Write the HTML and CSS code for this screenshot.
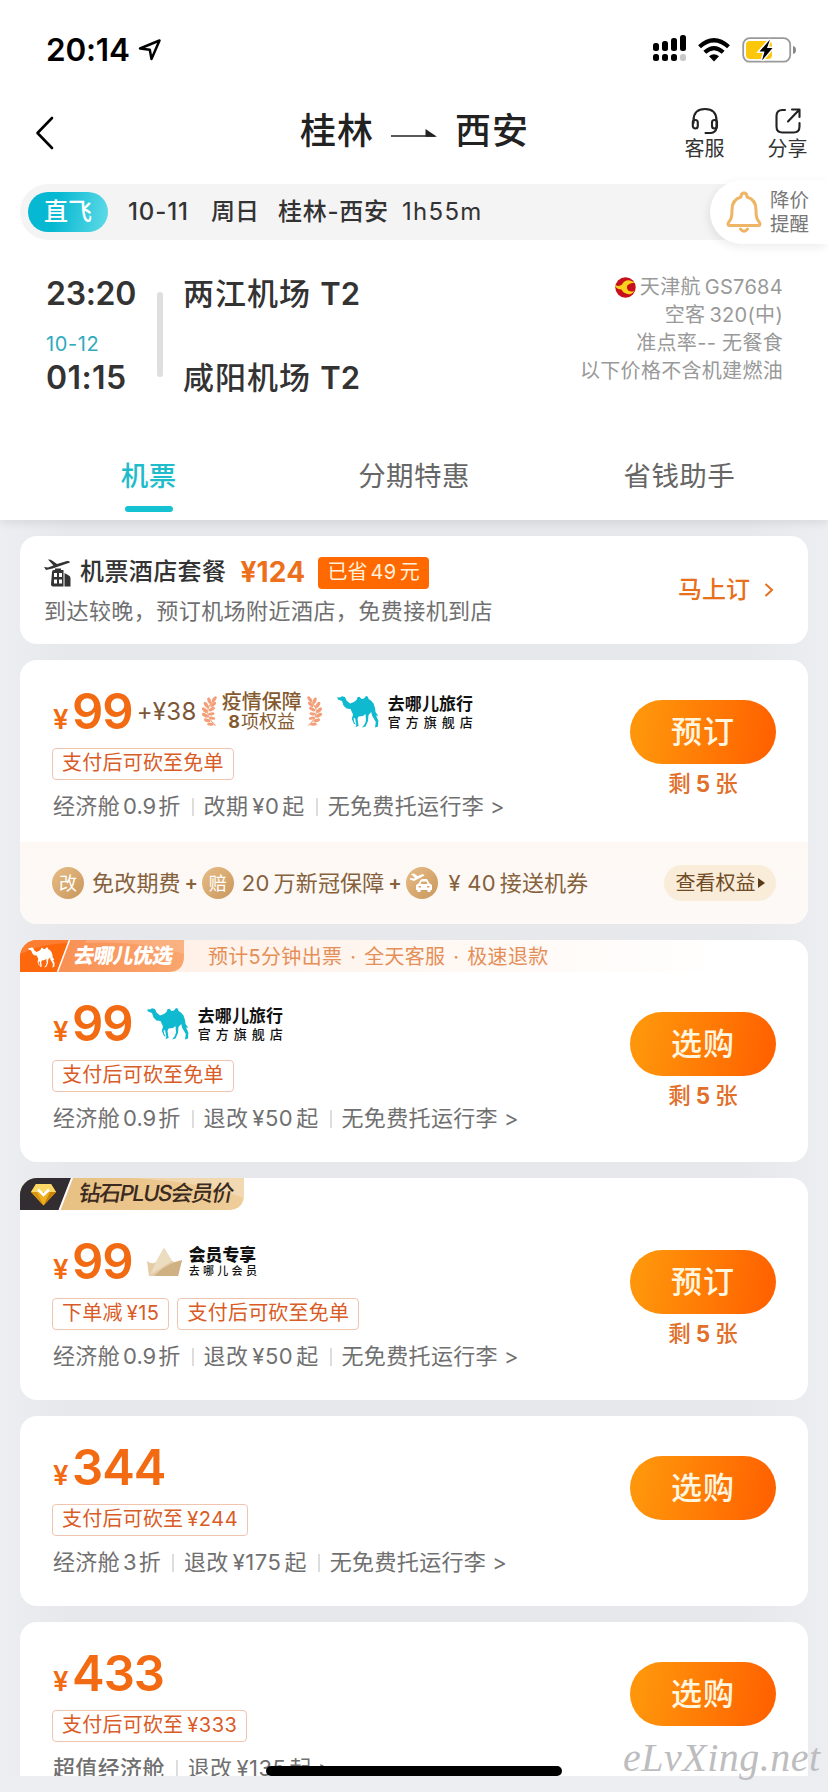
FILE: index.html
```html
<!DOCTYPE html>
<html lang="zh-CN">
<head>
<meta charset="utf-8">
<title>桂林 - 西安</title>
<link rel="stylesheet" href="styles.css">
</head>
<body>
<svg class="defs" width="0" height="0">
  <symbol id="camel" viewBox="0 0 42 32">
    <path d="M0 1.500 3.500 1.300 5 .3 8 1 9.500 4.500 13 7.500 17 6 19.500 4 20.500 1.200 22.500 .8 24.500 3 27 2.500 29 0 31 .8 31.500 3 34 4.500 36.500 7.500 38 12 38.500 16 41 19.500 40 20 38.800 19 41.300 24.500 41 30.500 38 31.600 38.800 26 35 19.500 34.300 16 31.500 19 31 25 28.500 30.500 25 31.600 27.800 28 29 24.500 28.500 18 26 20 21.500 20.500 20.500 23 21.600 29.800 18.500 31.200 19.300 28.500 18 22 16.500 22.500 17.200 26 19 28.500 17 28 14.800 23 16 18.500 13.500 13 9.500 12.500 6.500 9.500 5 5 1 3.600Z"/>
  </symbol>
  <symbol id="laurel" viewBox="0 0 18 34">
    <path d="M14.500 4Q-1 17 15.500 31.500" fill="none" stroke="#f3a884" stroke-width="1.200"/>
    <g fill="#f3a07a">
      <ellipse cx="14" cy="3.500" rx="1.800" ry="3.700" transform="rotate(35 14 3.500)"/>
      <ellipse cx="8.800" cy="5" rx="1.800" ry="3.700" transform="rotate(-20 8.800 5)"/>
      <ellipse cx="13" cy="9" rx="1.700" ry="3.600" transform="rotate(50 13 9)"/>
      <ellipse cx="5.500" cy="9.500" rx="1.900" ry="3.700" transform="rotate(-35 5.500 9.500)"/>
      <ellipse cx="11.500" cy="14" rx="1.700" ry="3.600" transform="rotate(60 11.500 14)"/>
      <ellipse cx="4" cy="15" rx="1.900" ry="3.700" transform="rotate(-45 4 15)"/>
      <ellipse cx="11" cy="19" rx="1.600" ry="3.400" transform="rotate(80 11 19)"/>
      <ellipse cx="4.300" cy="20.500" rx="1.900" ry="3.700" transform="rotate(-60 4.300 20.500)"/>
      <ellipse cx="12" cy="23.500" rx="1.600" ry="3.200" transform="rotate(100 12 23.500)"/>
      <ellipse cx="6.500" cy="25.800" rx="1.800" ry="3.600" transform="rotate(-70 6.500 25.800)"/>
      <ellipse cx="10" cy="30" rx="1.500" ry="3.500" transform="rotate(-85 10 30)"/>
    </g>
  </symbol>
</svg>

<div class="screen">
  <header class="top">
    <div class="status">
      <span class="clock">20:14</span>
      <svg class="loc" width="24" height="22" viewBox="0 0 24 22"><path d="M2 9.500 21.500 1.500 13.500 20 11.800 10.800Z" fill="none" stroke="#000" stroke-width="2.500" stroke-linejoin="round"/></svg>
      <svg class="signal" width="34" height="28" viewBox="0 0 34 28">
        <rect x="0" y="9" width="6" height="8" rx="2.500"/><rect x="9" y="7" width="6" height="10" rx="2.500"/><rect x="18" y="4" width="6" height="13" rx="2.500"/><rect x="27" y="1" width="6" height="16" rx="2.500"/>
        <rect x="0" y="20" width="6" height="7" rx="2.500"/><rect x="9" y="20" width="6" height="7" rx="2.500"/><rect x="18" y="20" width="6" height="7" rx="2.500"/><rect x="27" y="20" width="6" height="7" rx="2.500" fill="#c8c8c8"/>
      </svg>
      <svg class="wifi" width="32" height="24" viewBox="0 0 32 24"><g fill="none" stroke="#000" stroke-width="4.200"><path d="M1.500 8.800Q16-4.300 30.500 8.800"/><path d="M6.800 14.300Q16 6 25.200 14.300"/></g><path d="M11 18.200Q16 14.300 21 18.200L16 23.500Z"/></svg>
      <svg class="battery" width="56" height="28" viewBox="0 0 56 28">
        <rect x="1.200" y="2.200" width="47" height="23.500" rx="6.500" fill="#fff" stroke="#999" stroke-width="1.800"/>
        <rect x="4" y="5" width="26" height="18" rx="4" fill="#fcc60a"/>
        <path d="M51 10Q54 10.500 54 14T51 18Z" fill="#888"/>
        <path d="M28 3.500 17.500 15.500H22.500L20 24.500 30.500 12H25Z" fill="#000" stroke="#fff" stroke-width="3" paint-order="stroke"/>
      </svg>
    </div>

    <nav class="nav">
      <svg class="back" width="20" height="36" viewBox="0 0 20 36"><path d="M17 3 2.500 18 17 33" fill="none" stroke="#000" stroke-width="2.600" stroke-linecap="round" stroke-linejoin="round"/></svg>
      <h1 class="title"><span>桂林</span><svg width="46" height="10" viewBox="0 0 46 10"><path d="M0 8H44" stroke="#222" stroke-width="1.700"/><path d="M34.500 1 46 8.800H34.500Z" fill="#222"/></svg><span>西安</span></h1>
      <div class="tools">
        <div class="tool"><svg width="28" height="28" viewBox="0 0 28 28" fill="none" stroke="#222" stroke-width="2.100" stroke-linecap="round"><path d="M2.500 16V13.500Q2.500 2 14 2T25.500 13.500V21Q24.500 25.500 20 26H14.500"/><rect x="1.800" y="13" width="5" height="8.500" rx="2.500"/><rect x="21" y="13" width="5" height="8.500" rx="2.500"/></svg><span>客服</span></div>
        <div class="tool"><svg width="28" height="28" viewBox="0 0 28 28" fill="none" stroke="#222" stroke-width="2.100" stroke-linecap="round" stroke-linejoin="round"><path d="M11 3H8.500Q2.500 3 2.500 9V19.500Q2.500 25.500 8.500 25.500H19.500Q25.500 25.500 25.500 19.500V16M14 14.500 25 3M18 2.500H25.500V10"/></svg><span>分享</span></div>
      </div>
    </nav>

    <div class="trip">
      <span class="direct">直飞</span>
      <span class="trip-date">10-11</span>
      <span class="trip-day">周日</span>
      <span class="trip-route">桂林-西安</span>
      <span class="trip-time">1h55m</span>
      <div class="alert">
        <svg width="36" height="42" viewBox="0 0 36 42" fill="none" stroke="#efb566" stroke-width="3" stroke-linecap="round" stroke-linejoin="round"><path d="M15 6Q15 2 18 2T21 6Q30 8.500 30 19C30 27 31 28 33.500 31.500Q35 34.500 32 34.500H4Q1 34.500 2.500 31.500C5 28 6 27 6 19Q6 8.500 15 6Z"/><path d="M14.500 38Q18 42.500 21.500 38"/></svg>
        <span>降价<br>提醒</span>
      </div>
    </div>

    <section class="flight">
      <div class="times"><b>23:20</b><small>10-12</small><b class="arrive">01:15</b></div>
      <div class="line"></div>
      <div class="airports"><span>两江机场 <i>T2</i></span><span>咸阳机场 <i>T2</i></span></div>
      <div class="facts">
        <span><svg width="21" height="21" viewBox="0 0 21 21"><circle cx="10.500" cy="10.500" r="10.200" fill="#c80f1c"/><path d="M.5 8Q4 10 7 7.500Q10 2.500 15 3.500Q18 4 19.500 6Q16 5.500 14.500 7Q11.500 8 12 11Q12.500 14.500 17 14.500Q19 14.500 20 13Q17.500 18 12.500 17Q8 16 6.500 12.500Q3 12.500 .5 10Z" fill="#fbd21c"/></svg>天津航<i>GS7684</i></span>
        <span>空客<i>320(</i>中<i class="close">)</i></span>
        <span>准点率<i class="dash">--</i> 无餐食</span>
        <span>以下价格不含机建燃油</span>
      </div>
    </section>

    <div class="tabs"><span class="tab on">机票</span><span class="tab">分期特惠</span><span class="tab">省钱助手</span></div>
  </header>

  <main class="list">
    <section class="card combo">
      <div>
        <div class="combo-head">
          <svg width="28" height="30" viewBox="0 0 28 30" fill="#333"><path d="M4 1.500Q6 1 8 2.500L13 6 23 3Q26 2.500 26 4.500L8.500 10.500 2 12 0 9 4 9.500 9.500 7.500Z"/><path fill-rule="evenodd" d="M8 14Q8 12 10 12H11V10.500H17V12H19.500V28.500H9Q7 28.500 7 26.500ZM10 15V19H13V15ZM15 15V19H18V15ZM10 21.500V25.500H13V21.500ZM15 21.500V25.500H18V21.500Z"/><path d="M20.500 15 24 17Q26.500 18 26.500 20V28.500H20.500Z"/></svg>
          <b>机票酒店套餐</b><strong>¥124</strong><em>已省<i>49</i>元</em>
        </div>
        <p>到达较晚，预订机场附近酒店，免费接机到店</p>
      </div>
      <a class="go">马上订<svg width="10" height="16" viewBox="0 0 10 16"><path d="M1.500 2 8 8 1.500 14" fill="none" stroke="#e8701c" stroke-width="2"/></svg></a>
    </section>

    <section class="card">
      <div class="body short">
        <div class="info">
          <div class="price"><small>¥</small><b>99</b><span class="plus">+¥38</span>
            <div class="guard"><svg width="17" height="34"><use href="#laurel"/></svg><div><strong>疫情保障</strong><span><b>8</b>项权益</span></div><svg class="flip" width="17" height="34"><use href="#laurel"/></svg></div>
            <div class="shop near"><svg width="42" height="32" fill="#0fb9d0"><use href="#camel"/></svg><div><strong>去哪儿旅行</strong><span>官方旗舰店</span></div></div>
          </div>
          <div class="tags"><span>支付后可砍至免单</span></div>
          <div class="detail"><span>经济舱<i>0.9</i>折</span><span>改期<i>¥0</i>起</span><span>无免费托运行李<i class="gt">&gt;</i></span></div>
        </div>
        <div class="buy"><button>预订</button><span>剩<i>5</i>张</span></div>
      </div>
      <div class="perks">
        <span class="dot">改</span><span class="perk">免改期费</span><span class="and">+</span>
        <span class="dot">赔</span><span class="perk"><i>20</i>万新冠保障</span><span class="and">+</span>
        <span class="dot"><svg width="24" height="22" viewBox="0 0 24 22" fill="#fff"><path d="M1 2 4 1.500 7.500 4 13 2 14.500 3.500 4 9 0 7.500V6L4 6.500 5 6Z"/><path fill-rule="evenodd" d="M10.500 8 12 7H17L19.500 11.500 22 13V18H20.500V20H17.500V18H10.500V20H7.500V18H6V13L8.500 11.500ZM11.500 9.500 10.500 12H17.500L16.500 9.500ZM8.500 14V15.500H11V14ZM17 14V15.500H19.500V14Z"/></svg></span>
        <span class="perk last"><i>¥ 40</i>接送机券</span>
        <span class="more">查看权益<svg width="7" height="10" viewBox="0 0 7 10"><path d="M0 0 7 5 0 10Z" fill="#5a3a18"/></svg></span>
      </div>
    </section>

    <section class="card">
      <div class="ribbon select">
        <div class="badge"><svg width="164" height="32" viewBox="0 0 164 32"><defs><linearGradient id="o" x2="1"><stop stop-color="#f9894b"/><stop offset="1" stop-color="#f9a66e"/></linearGradient></defs><path d="M0 0H164V16Q164 32 148 32H0Z" fill="url(#o)"/><path d="M66 0H164V14Q120 0 66 3Z" fill="#fff" opacity=".15"/><path d="M0 0H49L37 32H0Z" fill="#fd680d"/><path d="M0 14Q24 3 48 3L49 0H0Z" fill="#fff" opacity=".15"/><path d="M49.500 0 37.500 32" stroke="#fff" stroke-width="1.500"/><svg x="8" y="7" width="27" height="21" fill="#fff"><use href="#camel"/></svg></svg><b>去哪儿优选</b></div>
        <span class="promo">预计5分钟出票 · 全天客服 · 极速退款</span>
      </div>
      <div class="body">
        <div class="info">
          <div class="price"><small>¥</small><b>99</b>
            <div class="shop"><svg width="42" height="32" fill="#0fb9d0"><use href="#camel"/></svg><div><strong>去哪儿旅行</strong><span>官方旗舰店</span></div></div>
          </div>
          <div class="tags"><span>支付后可砍至免单</span></div>
          <div class="detail"><span>经济舱<i>0.9</i>折</span><span>退改<i>¥50</i>起</span><span>无免费托运行李<i class="gt">&gt;</i></span></div>
        </div>
        <div class="buy"><button>选购</button><span>剩<i>5</i>张</span></div>
      </div>
    </section>

    <section class="card">
      <div class="ribbon">
        <div class="badge plusprice"><svg width="224" height="32" viewBox="0 0 224 32"><defs><linearGradient id="g" x2="1"><stop stop-color="#e6bd7e"/><stop offset="1" stop-color="#efcd99"/></linearGradient></defs><path d="M0 0H224V16Q224 32 208 32H0Z" fill="url(#g)"/><path d="M110 0H224V20Q180 3 110 0Z" fill="#fff" opacity=".25"/><path d="M0 0H52L39 32H0Z" fill="#312d31"/><path d="M52 0 39.500 32" stroke="#fff" stroke-width="2"/><path d="M16 6H31L36 14 23.500 27.500 11 14Z" fill="#eeb01e"/><path d="M16 6H31L36 14H11Z" fill="#fbd768"/><path d="M11 14H17L23.500 27.500Z" fill="#d79413"/><path d="M36 14H30L23.500 27.500Z" fill="#c98408"/><path d="M18 11.500 23.500 17 29 11.500" fill="none" stroke="#fff" stroke-width="2.500"/></svg><b>钻石PLUS会员价</b></div>
      </div>
      <div class="body">
        <div class="info">
          <div class="price"><small>¥</small><b>99</b>
            <div class="shop member"><svg width="35" height="30" viewBox="0 0 35 30"><path d="M0 14Q5 18 9 15L17 1 25 14Q31 17 35 13L31 29H2Z" fill="#e3cca6"/><path d="M17 1 25 14 3 28 9 15Z" fill="#ecdcc0"/><path d="M7 29Q20 16 35 13L31 29Z" fill="#d0b183"/></svg><div><strong>会员专享</strong><span>去哪儿会员</span></div></div>
          </div>
          <div class="tags"><span>下单减<i>¥15</i></span><span>支付后可砍至免单</span></div>
          <div class="detail"><span>经济舱<i>0.9</i>折</span><span>退改<i>¥50</i>起</span><span>无免费托运行李<i class="gt">&gt;</i></span></div>
        </div>
        <div class="buy"><button>预订</button><span>剩<i>5</i>张</span></div>
      </div>
    </section>

    <section class="card">
      <div class="body">
        <div class="info">
          <div class="price"><small>¥</small><b>344</b></div>
          <div class="tags"><span>支付后可砍至<i>¥244</i></span></div>
          <div class="detail"><span>经济舱<i>3</i>折</span><span>退改<i>¥175</i>起</span><span>无免费托运行李<i class="gt">&gt;</i></span></div>
        </div>
        <div class="buy"><button>选购</button></div>
      </div>
    </section>

    <section class="card">
      <div class="body">
        <div class="info">
          <div class="price"><small>¥</small><b>433</b></div>
          <div class="tags"><span>支付后可砍至<i>¥333</i></span></div>
          <div class="detail"><span class="strong">超值经济舱</span><span>退改<i>¥135</i>起<i class="gt">&gt;</i></span></div>
        </div>
        <div class="buy"><button>选购</button></div>
      </div>
    </section>
  </main>
  <div class="home"></div>
  <footer class="foot"></footer>
  <div class="mark">eLvXing.net</div>
</div>
</body>
</html>
```

FILE: styles.css
```css
* { box-sizing: border-box; }
body { margin: 0; background: #e8e9ed; font-family: Inter, "Noto Sans CJK SC", sans-serif; line-height: 1.2; color: #333; }
i, em { font-style: normal; }
p, h1 { margin: 0; }
svg { display: block; flex: none; }
.defs { position: absolute; }
.screen { position: relative; width: 828px; height: 1792px; overflow: hidden; display: flex; flex-direction: column; background: linear-gradient(90deg, #edeef2, #e7e8ec 8%, #e7e8ec 90%, #edeef2); }

.top { position: relative; z-index: 1; flex: none; height: 520px; background: #fff; box-shadow: 0 2px 10px rgba(0, 0, 0, .1); }
.status { height: 94px; padding: 5px 30px 0 46px; display: flex; align-items: center; }
.clock { width: 92px; font-size: 31.500px; font-weight: 600; color: #000; letter-spacing: -.2px; }
.signal { margin-left: 491px; margin-top: -4px; }
.wifi { margin-left: 11px; }
.battery { margin-left: 12px; }

.nav { height: 90px; padding: 0 20px 0 35px; display: flex; align-items: flex-start; }
.back { margin-top: 21px; }
.title { margin-left: 245px; height: 76px; display: flex; align-items: center; font-size: 36px; font-weight: 500; letter-spacing: 1px; color: #222; }
.title svg { margin: 2px 18px 0 17px; }
.tools { margin-left: auto; display: flex; gap: 42px; padding-top: 13px; }
.tool { width: 41px; display: flex; flex-direction: column; align-items: center; font-size: 20px; line-height: 24px; color: #333; }
.tool span { margin-top: 2px; }

.trip { height: 56px; margin-left: 20px; padding-left: 8px; display: flex; align-items: center; background: #f4f4f4; border-radius: 28px 0 0 28px; font-size: 24px; font-weight: 500; }
.direct { width: 80px; height: 40px; line-height: 40px; border-radius: 20px; text-align: center; color: #fff; background: linear-gradient(100deg, #06b8d1 35%, #60dbe8); }
.trip-date { width: 83px; margin-left: 20px; letter-spacing: .9px; }
.trip-day { width: 67px; }
.trip-route { width: 124px; letter-spacing: .7px; }
.trip-time { font-weight: 400; letter-spacing: 1.300px; }
.alert { margin-left: auto; width: 118px; height: 64px; padding-left: 16px; display: flex; align-items: center; gap: 8px; background: #fff; border-radius: 32px 0 0 32px; box-shadow: -2px 3px 10px rgba(0, 0, 0, .08); font-size: 19.500px; line-height: 24px; font-weight: 400; color: #777; }

.flight { height: 190px; padding: 32px 45px 0 46px; display: flex; }
.times { width: 111px; display: flex; flex-direction: column; }
.times b { font-size: 32px; line-height: 44px; font-weight: 600; letter-spacing: -.3px; }
.times .arrive { letter-spacing: .4px; }
.times small { font-size: 20px; line-height: 24px; margin: 16px 0 0; color: #2fabbd; letter-spacing: .6px; }
.line { width: 6px; height: 85px; margin-top: 20px; border-radius: 3px; background: #dfdfdf; }
.airports { margin-left: 20px; display: flex; flex-direction: column; gap: 40px; font-size: 31px; line-height: 44px; font-weight: 500; letter-spacing: 1px; white-space: pre; }
.airports i { letter-spacing: 0; font-weight: 600; }
.facts { margin-left: auto; padding-top: 1px; display: flex; flex-direction: column; align-items: flex-end; font-size: 20px; line-height: 28px; color: #999; letter-spacing: .3px; white-space: pre; }
.facts span { display: flex; align-items: center; }
.facts svg { margin-right: 4px; }
.facts i { margin-left: 4px; letter-spacing: .3px; }
.facts .close, .facts .dash { margin-left: 0; }

.tabs { height: 90px; padding: 0 16px; display: flex; }
.tab { flex: 1; position: relative; padding-top: 29px; text-align: center; font-size: 27.500px; line-height: 34px; letter-spacing: .4px; color: #666; }
.tab.on { color: #1fbccb; font-weight: 500; }
.tab.on::after { content: ""; display: block; width: 48px; height: 6px; margin: 13px auto 0; border-radius: 3px; background: #14c2d2; }

.list { height: 1256px; flex: none; overflow: hidden; padding: 16px 20px 0; display: flex; flex-direction: column; gap: 16px; }
.card { flex: none; background: #fff; border-radius: 17px; overflow: hidden; }
.combo { height: 108px; padding: 18px 34px 0 24px; display: flex; justify-content: space-between; }
.combo-head { display: flex; align-items: center; height: 37px; }
.combo-head b { margin-left: 8px; font-size: 24px; font-weight: 500; letter-spacing: .4px; }
.combo-head strong { margin-left: 14px; width: 78px; font-size: 28px; font-weight: 700; color: #ec6f1c; letter-spacing: .2px; }
.combo-head em { height: 32px; line-height: 31px; padding: 0 9px; border-radius: 4px; background: #ff6900; color: #fff0dc; font-size: 20px; white-space: nowrap; }
.combo-head em i { margin: 0 3px; letter-spacing: .5px; }
.combo p { font-size: 22px; line-height: 40px; letter-spacing: .45px; color: #707070; }
.go { display: flex; align-items: center; gap: 14px; height: 72px; font-size: 24px; font-weight: 500; color: #e8701c; }

.body { height: 190px; padding: 0 32px; display: flex; justify-content: space-between; }
.body.short { height: 182px; }
.info { padding-top: 24px; }
.price { height: 56px; display: flex; align-items: baseline; color: #f26a12; white-space: nowrap; }
.price > small { width: 20px; padding-left: 1px; font-size: 27.500px; font-weight: 600; }
.price > b { font-size: 49px; line-height: 56px; font-weight: 600; letter-spacing: -1px; }
.plus { margin-left: 4px; width: 64px; font-size: 24px; color: #7b5738; align-self: center; letter-spacing: .3px; }
.guard { display: flex; align-items: center; gap: 4px; height: 56px; color: #855a2e; align-self: center; }
.guard div { width: 80px; display: flex; flex-direction: column; align-items: center; }
.guard strong { font-size: 20px; line-height: 20px; font-weight: 500; }
.guard span { font-size: 18px; line-height: 20px; }
.guard span b { margin-right: 1px; font-weight: 700; }
.flip { transform: scaleX(-1); }
.shop { margin-left: 14px; display: flex; align-items: center; gap: 9px; height: 56px; align-self: center; color: #111; }
.shop.near { margin-left: 14px; }
.shop div { display: flex; flex-direction: column; padding-top: 1px; }
.shop strong { font-size: 17px; line-height: 19px; font-weight: 700; letter-spacing: .1px; }
.shop span { font-size: 13px; line-height: 17px; font-weight: 500; letter-spacing: 5px; }
.shop.member { gap: 7px; }
.shop.member strong { font-size: 16.800px; font-weight: 900; line-height: 18px; }
.shop.member span { font-size: 11px; line-height: 15px; letter-spacing: 3.300px; }
.tags { margin-top: 8px; display: flex; gap: 8px; }
.tags span { height: 32px; padding: 0 9px; border: 1px solid #f0c5b0; border-radius: 4px; font-size: 20px; line-height: 29px; letter-spacing: .22px; color: #d95b26; white-space: nowrap; }
.tags i { margin-left: 4px; letter-spacing: .5px; }
.detail { margin-top: 10px; height: 32px; padding-left: 1px; display: flex; align-items: center; font-size: 22px; letter-spacing: .35px; color: #707070; white-space: nowrap; }
.detail span + span::before { content: ""; display: inline-block; width: 2px; height: 18px; margin: 0 10px 0 11px; background: #ddd; vertical-align: -2px; }
.detail i { margin: 0 3px 0 4px; letter-spacing: .5px; }
.detail span:first-child i { margin: 0 2px 0 3px; letter-spacing: 0; }
.detail .gt { margin-left: 6px; }
.detail .strong { font-weight: 500; }
.buy { width: 146px; padding-top: 40px; display: flex; flex-direction: column; align-items: center; }
.buy button { width: 146px; height: 64px; padding: 0 0 1px; border: 0; border-radius: 32px; background: linear-gradient(100deg, #ff950b 10%, #ff6300 92%); color: #fff6e0; font: 500 31px/1.2 Inter, "Noto Sans CJK SC", sans-serif; letter-spacing: 1px; }
.buy span { margin-top: 5px; font-size: 22.500px; line-height: 30px; font-weight: 500; color: #e0702a; }
.buy i { margin: 0 5px; font-weight: 700; }

.perks { height: 82px; padding: 0 32px; display: flex; align-items: center; background: linear-gradient(#fdf8f4, #fdf9f6); color: #85613c; font-size: 22px; letter-spacing: .2px; white-space: nowrap; }
.dot { width: 32px; height: 32px; border-radius: 50%; background: linear-gradient(135deg, #e7bd86, #c9975c); color: #fff; font-size: 18px; line-height: 31px; text-align: center; display: flex; align-items: center; justify-content: center; }
.perk { margin-left: 8px; }
.perk.last { margin-left: 11px; }
.perk i { margin-right: 4px; }
.and { width: 21px; text-align: center; font-weight: 600; font-size: 20px; }
.more { margin-left: auto; height: 36px; width: 112px; border-radius: 18px; background: #f9ecd9; display: flex; align-items: center; justify-content: center; gap: 2px; color: #704b25; font-size: 20px; letter-spacing: 0; }

.ribbon { height: 32px; display: flex; }
.ribbon.select { background: linear-gradient(90deg, #fff1e8 20%, #fff 90%); }
.badge { position: relative; height: 32px; }
.badge b { position: absolute; left: 54px; top: 0; line-height: 31px; font-size: 20.500px; font-weight: 900; color: #fff; transform: skewX(-10deg); white-space: nowrap; letter-spacing: -.8px; }
.badge.plusprice b { left: 59px; font-size: 22px; font-weight: 500; color: #3a2a20; letter-spacing: -1.500px; }
.promo { margin-left: 24px; line-height: 34px; font-size: 20px; letter-spacing: .3px; word-spacing: 2px; color: #e58f58; white-space: nowrap; }

.home { position: absolute; z-index: 2; left: 266px; top: 1766px; width: 296px; height: 10px; border-radius: 5px; background: #000; }
.foot { flex: none; height: 16px; background: #edeef2; }
.mark { position: absolute; z-index: 3; left: 623px; top: 1734px; font: italic 40px/48px "Liberation Serif", cursive; letter-spacing: .5px; color: #bdbdc0; }
```
